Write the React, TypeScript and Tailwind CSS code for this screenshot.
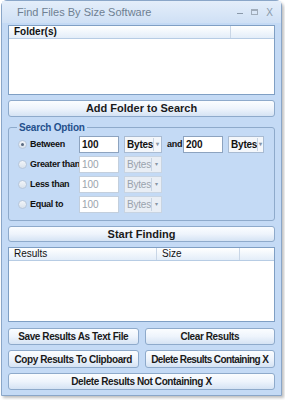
import React from "react";

const font = "font-['Liberation_Sans',Arial,sans-serif]";

function Btn({ label, className = "" }: { label: string; className?: string }) {
  return (
    <div
      className={`flex items-center justify-center whitespace-nowrap rounded-[3px] border border-[#8eaacb] bg-gradient-to-b from-[#fbfdff] via-[#eef4fc] to-[#d5e3f4] font-bold text-[#1a1a1a] ${className}`}
    >
      {label}
    </div>
  );
}

function Radio({ checked }: { checked?: boolean }) {
  return (
    <span className="flex h-[9px] w-[9px] shrink-0 items-center justify-center rounded-full border border-[#b7c7db] bg-gradient-to-b from-[#f2f5f9] to-[#d9e2ec]">
      {checked && <span className="h-[3px] w-[3px] rounded-full bg-[#5a6a80]" />}
    </span>
  );
}

function Select({ active, w }: { active?: boolean; w: string }) {
  return (
    <div
      className={`ml-[5px] flex h-[17px] items-center justify-between border pl-[2px] text-[10px] tracking-[-0.2px] ${w} ${
        active ? "border-[#a9bbd2] bg-[#f4f7fb] font-bold text-[#111]" : "border-[#c8d4e2] bg-[#e9eef5] text-[#9aa3ad]"
      }`}
    >
      Bytes
      <span className="mr-[1px] flex h-[13px] w-[9px] items-center justify-center border-l border-[#c8d4e2] text-[6px] text-[#8895a5]">
        ▾
      </span>
    </div>
  );
}

function Row({ label, active, extra }: { label: string; active?: boolean; extra?: boolean }) {
  return (
    <div className="flex h-[17px] items-center">
      <div className="flex w-[64px] shrink-0 items-center gap-[3px] whitespace-nowrap pl-[3px]">
        <Radio checked={active} />
        <span className="text-[9px] font-bold tracking-[-0.3px] text-[#111]">{label}</span>
      </div>
      <div
        className={`flex h-[17px] w-[40px] shrink-0 items-center border bg-white pl-[2px] text-[10px] ${
          active ? "border-[#8da3bf] font-bold text-[#111]" : "border-[#c3cfdd] text-[#9aa3ad]"
        }`}
      >
        100
      </div>
      <Select active={active} w="w-[38px]" />
      {extra && (
        <>
          <span className="ml-[5px] w-[16px] shrink-0 text-[9px] font-bold tracking-[-0.2px] text-[#111]">and</span>
          <div className="flex h-[17px] w-[40px] shrink-0 items-center border border-[#8da3bf] bg-white pl-[2px] text-[10px] font-bold text-[#111]">
            200
          </div>
          <Select active w="w-[36px]" />
        </>
      )}
    </div>
  );
}

export default function App() {
  return (
    <div className={`h-[400px] w-[285px] bg-white ${font}`}>
      <div className="ml-[1px] flex h-[396px] w-[281px] flex-col rounded-t-[6px] border border-[#8aa6c8] bg-[#c4daf5] shadow-[2px_2px_3px_rgba(0,0,0,0.25)]">
        {/* title bar */}
        <div className="flex h-[22px] items-center justify-between bg-gradient-to-b from-[#e4eefa] to-[#cfe0f5] pl-[15px] pr-[8px]">
          <span className="text-[11px] text-[#6e7f92]">Find Files By Size Software</span>
          <div className="flex items-center gap-[8px] text-[9px] text-[#8a99aa]">
            <span className="mt-[3px] h-[1px] w-[6px] bg-[#8a99aa]" />
            <span className="h-[6px] w-[7px] border border-t-2 border-[#a0acba]" />
            <span className="text-[10px]">X</span>
          </div>
        </div>

        <div className="flex flex-1 flex-col px-[6px] pt-[2px]">
          {/* folder list */}
          <div className="flex h-[70px] flex-col border border-[#7f9fc4] bg-white">
            <div className="flex h-[13px] border-b border-[#b7cce4] bg-gradient-to-b from-white to-[#e3edf9] text-[10px] font-bold text-[#111]">
              <span className="w-[222px] border-r border-[#c9d6e6] pl-[5px] leading-[12px]">Folder(s)</span>
            </div>
          </div>

          <Btn label="Add Folder to Search" className="mt-[5px] h-[17px] text-[11px]" />

          {/* search option group */}
          <fieldset className="mt-[3px] h-[101px] rounded-[3px] border border-[#8eaacb] px-[6px] pt-[1px]">
            <legend className="ml-[2px] px-[2px] text-[10px] font-bold tracking-[-0.2px] text-[#24508c]">Search Option</legend>
            <div className="flex flex-col gap-[3px]">
              <Row label="Between" active extra />
              <Row label="Greater than" />
              <Row label="Less than" />
              <Row label="Equal to" />
            </div>
          </fieldset>

          <Btn label="Start Finding" className="mt-[5px] h-[16px] text-[11px]" />

          {/* results list */}
          <div className="mt-[5px] flex h-[75px] flex-col border border-[#7f9fc4] bg-white">
            <div className="flex h-[13px] border-b border-[#b7cce4] bg-gradient-to-b from-white to-[#e3edf9] text-[10px] text-[#111]">
              <span className="w-[148px] border-r border-[#c9d6e6] pl-[5px] leading-[12px]">Results</span>
              <span className="w-[83px] border-r border-[#c9d6e6] pl-[5px] leading-[12px]">Size</span>
            </div>
          </div>

          <div className="mt-[6px] grid grid-cols-2 gap-x-[6px] gap-y-[5px] text-[10px] tracking-[-0.4px]">
            <Btn label="Save Results As Text File" className="h-[17px]" />
            <Btn label="Clear Results" className="h-[17px]" />
            <Btn label="Copy Results To Clipboard" className="h-[18px]" />
            <Btn label="Delete Results Containing X" className="h-[18px] tracking-[-0.6px]" />
            <Btn label="Delete Results Not Containing X" className="col-span-2 h-[17px]" />
          </div>
        </div>
      </div>
    </div>
  );
}
